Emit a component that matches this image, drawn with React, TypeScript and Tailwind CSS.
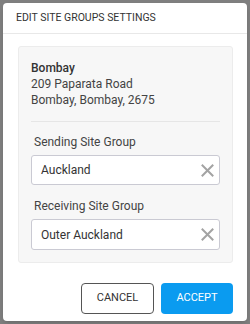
import React from "react";

function ClearIcon() {
    return (
        <svg width="13" height="13" viewBox="0 0 13 13" fill="none">
            <path d="M1.5 1.5L11.5 11.5M11.5 1.5L1.5 11.5" stroke="#a3a3a3" strokeWidth="2" strokeLinecap="square" />
        </svg>
    );
}

function SiteGroupField({ label, value, tall }: { label: string; value: string; tall?: boolean }) {
    return (
        <div>
            <div className="pl-[3px] leading-[16px] text-[#444]">{label}</div>
            <div
                className={`mt-[5px] flex items-center justify-between rounded-[3px] border border-[#cacad3] bg-white pl-[9px] pr-[5px] ${tall ? "h-[31px]" : "h-[30px]"}`}
            >
                <span className="text-[#333]">{value}</span>
                <ClearIcon />
            </div>
        </div>
    );
}

export default function App() {
    return (
        <div
            className="w-[250px] h-[324px] bg-[#7f7f7f] p-[3px] text-[12px]"
            style={{ fontFamily: "Roboto, 'Liberation Sans', sans-serif" }}
        >
            <div className="flex h-[318px] flex-col rounded-[4px] bg-white shadow-md">
                {/* header */}
                <div className="flex h-[31px] items-center border-b border-[#e8e8e8] pl-[13px] text-[10.5px] text-[#333]">
                    EDIT SITE GROUPS SETTINGS
                </div>

                {/* body */}
                <div className="pl-[15px] pr-[14px] pt-[12px]">
                    <div className="rounded-[3px] border border-[#ececec] bg-[#f7f7f7] px-[12px] pt-[13px] pb-[12px]">
                        <div className="leading-[16px] text-[#333]">
                            <div className="font-medium">Bombay</div>
                            <div className="text-[#444]">209 Paparata Road</div>
                            <div className="text-[#444]">Bombay, Bombay, 2675</div>
                        </div>
                        <div className="mt-[13px] h-px bg-[#e6e6e6]" />
                        <div className="mt-[12px]">
                            <SiteGroupField label="Sending Site Group" value="Auckland" />
                        </div>
                        <div className="mt-[13px]">
                            <SiteGroupField label="Receiving Site Group" value="Outer Auckland" tall />
                        </div>
                    </div>
                </div>

                {/* footer */}
                <div className="mt-[20px] flex justify-end gap-[7px] pr-[14px]">
                    <button className="h-[31px] w-[73px] rounded-[4px] border border-[#555] bg-white text-[11px] text-[#333]">
                        CANCEL
                    </button>
                    <button className="h-[31px] w-[72px] rounded-[4px] bg-[#0a9bf0] text-[11px] text-white">
                        ACCEPT
                    </button>
                </div>
            </div>
        </div>
    );
}
